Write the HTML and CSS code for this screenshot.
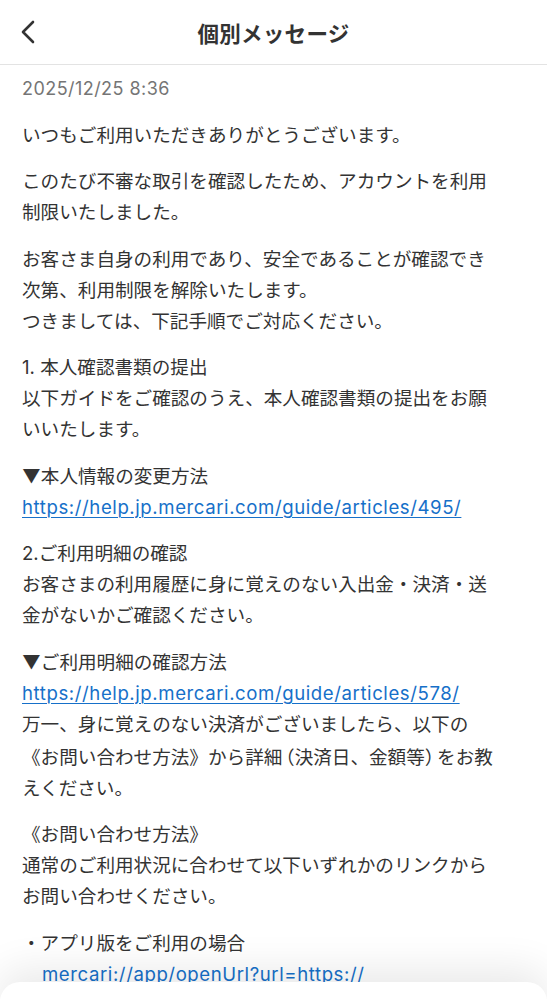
FILE: index.html
```html
<!DOCTYPE html>
<html lang="ja">
<head>
<meta charset="utf-8">
<title>個別メッセージ</title>
<link rel="stylesheet" href="styles.css">
</head>
<body>
<div class="screen">
  <header class="header">
    <button class="back" aria-label="戻る">
      <svg width="16" height="24" viewBox="0 0 16 24"><path d="M13 2 L3 12 L13 22" fill="none" stroke="#333" stroke-width="2.6" stroke-linecap="round" stroke-linejoin="round"/></svg>
    </button>
    <h1 class="title">個別メッセージ</h1>
    <span class="spacer"></span>
  </header>
  <main class="content">
    <p class="date">2025/12/25 8:36</p>
    <p>いつもご利用いただきありがとうございます。</p>
    <p>このたび不審な取引を確認したため、アカウントを利用<br>制限いたしました。</p>
    <p>お客さま自身の利用であり、安全であることが確認でき<br>次第、利用制限を解除いたします。<br>つきましては、下記手順でご対応ください。</p>
    <p>1. 本人確認書類の提出<br>以下ガイドをご確認のうえ、本人確認書類の提出をお願<br>いいたします。</p>
    <p>▼本人情報の変更方法<br><a class="link" href="#">https://help.jp.mercari.com/guide/articles/495/</a></p>
    <p>2.ご利用明細の確認<br>お客さまの利用履歴に身に覚えのない入出金・決済・送<br>金がないかご確認ください。</p>
    <p>▼ご利用明細の確認方法<br><a class="link" href="#">https://help.jp.mercari.com/guide/articles/578/</a><br>万一、身に覚えのない決済がございましたら、以下の<br>《お問い合わせ方法》から詳細<span class="paren open">（</span>決済日、金額等<span class="paren close">）</span>をお教<br>えください。</p>
    <p>《お問い合わせ方法》<br>通常のご利用状況に合わせて以下いずれかのリンクから<br>お問い合わせください。</p>
    <p>・アプリ版をご利用の場合<br><a class="link indent" href="#">mercari://app/openUrl?url=https://</a></p>
  </main>
  <div class="sheet"></div>
</div>
</body>
</html>
```
FILE: styles.css
```css
* { box-sizing: border-box; }
html, body {
  margin: 0;
  padding: 0;
  background: #fff;
}
body {
  font-family: "Inter", "Noto Sans CJK JP", sans-serif;
  color: #333;
}
.screen {
  width: 547px;
  height: 999px;
  overflow: hidden;
  position: relative;
  background: #fff;
}
.header {
  height: 65px;
  display: flex;
  align-items: center;
  justify-content: space-between;
  border-bottom: 1px solid #e3e3e3;
  padding: 0 16px;
}
.back {
  width: 40px;
  height: 40px;
  padding: 0;
  border: 0;
  background: none;
  display: flex;
  align-items: center;
  justify-content: flex-start;
  padding-left: 4px;
}
.spacer { width: 40px; }
.title {
  margin: 0;
  font-family: "Noto Sans CJK JP", sans-serif;
  font-size: 21.5px;
  font-weight: 700;
  color: #333;
  letter-spacing: 0.3px;
}
.content {
  padding: 8px 22px 0 22px;
  font-size: 18.6px;
  line-height: 31px;
}
.content p {
  margin: 0 0 15.5px 0;
  white-space: nowrap;
}
.date {
  color: #757575;
  font-size: 18px;
  letter-spacing: 0.45px;
}
.paren {
  font-family: "Noto Sans CJK JP", sans-serif;
  font-feature-settings: "halt";
}
.paren.open { margin-left: 3px; }
.paren.close { margin-right: 3px; }
.link {
  color: #1670c9;
  text-decoration: underline;
  text-underline-offset: 3px;
  text-decoration-thickness: 1px;
  letter-spacing: 0.58px;
}
.indent {
  margin-left: 20px;
}
.sheet {
  position: absolute;
  left: 0;
  right: 0;
  top: 982px;
  height: 60px;
  background: #fff;
  border-radius: 20px 20px 0 0;
  box-shadow: 0 -12px 40px rgba(0, 0, 0, 0.09);
}
```
